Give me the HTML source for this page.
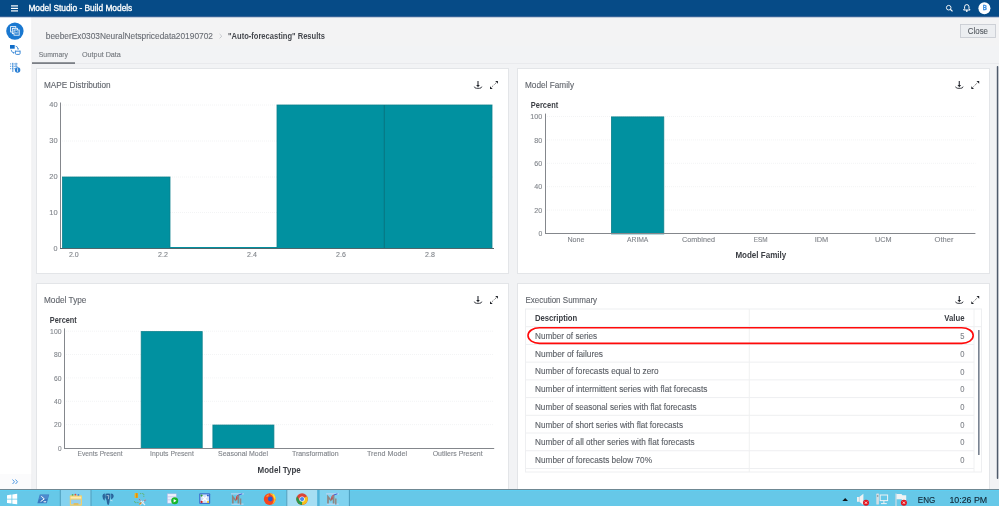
<!DOCTYPE html>
<html><head><meta charset="utf-8"><title>Model Studio - Build Models</title>
<style>html,body{margin:0;padding:0;width:999px;height:506px;overflow:hidden;background:#f2f3f5}
svg{display:block;will-change:transform;font-family:"Liberation Sans",sans-serif}</style></head>
<body><svg width="999" height="506" viewBox="0 0 999 506">
<rect x="0" y="0" width="999" height="506" fill="#f2f3f5"/>
<rect x="32" y="17" width="967" height="29" fill="#f3f3f4"/>
<rect x="0" y="17" width="32" height="472" fill="#ffffff"/>
<rect x="0" y="474" width="32" height="15" fill="#fbfbfc"/>
<rect x="31.5" y="17" width="0.6" height="472" fill="#e9eaec"/>
<rect x="0" y="0" width="999" height="16.3" fill="#064b87"/>
<rect x="0" y="16.3" width="999" height="0.9" fill="#013a7c"/>
<rect x="11" y="5.3" width="7" height="1.2" fill="#ffffff"/>
<rect x="11" y="7.8" width="7" height="1.2" fill="#ffffff"/>
<rect x="11" y="10.3" width="7" height="1.2" fill="#ffffff"/>
<text x="28.40" y="11.00" font-size="8.72" font-weight="normal" fill="#ffffff" textLength="103.91" lengthAdjust="spacingAndGlyphs" stroke="#ffffff" stroke-width="0.3">Model Studio - Build Models</text>
<circle cx="948.7" cy="7.7" r="2.3" fill="none" stroke="#ffffff" stroke-width="0.9"/>
<line x1="950.3" y1="9.3" x2="952.5" y2="11.4" stroke="#ffffff" stroke-width="1.2"/>
<path d="M963.5 10 L964.6 8.6 L964.6 6.8 Q964.6 4.6 966.8 4.6 Q969 4.6 969 6.8 L969 8.6 L970.1 10 Z" fill="none" stroke="#ffffff" stroke-width="1"/>
<circle cx="966.8" cy="11" r="0.9" fill="#ffffff"/>
<circle cx="984.4" cy="8.2" r="6" fill="#ffffff"/>
<text x="982.80" y="10.40" font-size="7.56" font-weight="bold" fill="#3a8ee0" textLength="4.11" lengthAdjust="spacingAndGlyphs" stroke="#3a8ee0" stroke-width="0.3">B</text>
<circle cx="14.9" cy="31.1" r="8.7" fill="#1a78d0"/>
<rect x="10.6" y="26.6" width="5.2" height="5.4" fill="#1a78d0" stroke="#ffffff" stroke-width="0.8"/>
<rect x="12.3" y="28.3" width="5.2" height="5.4" fill="#1a78d0" stroke="#ffffff" stroke-width="0.8"/>
<rect x="14" y="30" width="5.2" height="5.2" fill="#1a78d0" stroke="#ffffff" stroke-width="0.8"/>
<path d="M15.3 33.6 L15.3 31.6 M16.6 33.6 L16.6 32.2 M17.9 33.6 L17.9 31.2" stroke="#ffffff" stroke-width="0.6"/>
<path d="M13.4 29 L13.4 27.6 M14.6 28.6 L14.6 27.8" stroke="#ffffff" stroke-width="0.5"/>
<rect x="10" y="45" width="4.7" height="3.7" fill="#0f6cc8"/>
<path d="M15.4 50.6 L15.4 53.4 Q15.4 54.4 16.4 54.4 L19.1 54.4 Q20.1 54.4 20.1 53.4 L20.1 50.6 M15.4 51.2 L20.1 51.2" fill="none" stroke="#2a7fd4" stroke-width="0.9"/>
<path d="M15.6 46.2 Q17.6 46.2 18 48.8" fill="none" stroke="#2a7fd4" stroke-width="0.8"/>
<path d="M17 48.6 L18.1 50 L19 48.4 Z" fill="#2a7fd4"/>
<path d="M11.2 49.8 Q11.4 52.4 13.6 52.8" fill="none" stroke="#2a7fd4" stroke-width="0.8"/>
<path d="M13.2 51.8 L14.8 52.8 L13.2 53.8 Z" fill="#2a7fd4"/>
<line x1="10" y1="63.9" x2="18.4" y2="63.9" stroke="#2a7fd4" stroke-width="0.8" stroke-dasharray="1.2 0.9"/>
<line x1="10" y1="66.3" x2="18.4" y2="66.3" stroke="#2a7fd4" stroke-width="0.8" stroke-dasharray="1.2 0.9"/>
<line x1="10" y1="68.7" x2="18.4" y2="68.7" stroke="#2a7fd4" stroke-width="0.8" stroke-dasharray="1.2 0.9"/>
<line x1="12.8" y1="62.8" x2="12.8" y2="72" stroke="#2a7fd4" stroke-width="0.8"/>
<line x1="16" y1="62.8" x2="16" y2="67.4" stroke="#2a7fd4" stroke-width="0.8"/>
<circle cx="17.6" cy="70" r="2.7" fill="#2a7fd4"/>
<rect x="17.25" y="69.2" width="0.8" height="2.5" fill="#ffffff"/><rect x="17.25" y="68" width="0.8" height="0.7" fill="#ffffff"/>
<path d="M12.5 479.5 L14.5 481.8 L12.5 484 M15.5 479.5 L17.5 481.8 L15.5 484" fill="none" stroke="#3b8de0" stroke-width="0.9"/>
<text x="45.80" y="39.00" font-size="8.87" font-weight="normal" fill="#6a6e75" textLength="167.11" lengthAdjust="spacingAndGlyphs" stroke="#6a6e75" stroke-width="0.12">beeberEx0303NeuralNetspricedata20190702</text>
<path d="M219.6 34 L221.8 36.2 L219.6 38.4" fill="none" stroke="#b9bcc1" stroke-width="0.8"/>
<text x="228.00" y="39.00" font-size="8.87" font-weight="bold" fill="#45484e" textLength="96.99" lengthAdjust="spacingAndGlyphs" >"Auto-forecasting" Results</text>
<rect x="960.5" y="24.5" width="35" height="13" fill="#eceef1" stroke="#c9cdd3" stroke-width="0.9"/>
<text x="967.80" y="34.20" font-size="8.87" font-weight="normal" fill="#555a61" textLength="20.21" lengthAdjust="spacingAndGlyphs" stroke="#555a61" stroke-width="0.12">Close</text>
<text x="38.80" y="56.80" font-size="7.70" font-weight="normal" fill="#74787e" textLength="29.19" lengthAdjust="spacingAndGlyphs" stroke="#74787e" stroke-width="0.12">Summary</text>
<text x="82.00" y="56.80" font-size="7.70" font-weight="normal" fill="#74787e" textLength="38.88" lengthAdjust="spacingAndGlyphs" stroke="#74787e" stroke-width="0.12">Output Data</text>
<rect x="32" y="63" width="967" height="0.8" fill="#e6e8eb"/>
<rect x="32" y="62.2" width="43" height="1.8" fill="#7b7f86"/>
<rect x="996.8" y="66" width="1.5" height="413" rx="0.7" fill="#4f5b6b"/>
<rect x="36.5" y="68.5" width="472" height="205" fill="#ffffff" stroke="#e3e5e8" stroke-width="1"/>
<rect x="517.5" y="68.5" width="472" height="205" fill="#ffffff" stroke="#e3e5e8" stroke-width="1"/>
<rect x="36.5" y="283.5" width="472" height="211" fill="#ffffff" stroke="#e3e5e8" stroke-width="1"/>
<rect x="517.5" y="283.5" width="472" height="211" fill="#ffffff" stroke="#e3e5e8" stroke-width="1"/>
<g transform="translate(0,0)">
<path d="M478 81 L478 85.6" fill="none" stroke="#3a3d44" stroke-width="1.2"/>
<path d="M476.2 85 L479.8 85 L478 87.3 Z" fill="#1f2228"/>
<path d="M474.3 86.6 Q474.8 88.4 476.5 88.3 L479.5 88.3 Q481.3 88.4 481.8 86.6" fill="none" stroke="#3a3d44" stroke-width="1"/>
<path d="M492.2 86.6 L496 82.9" stroke="#555" stroke-width="0.9" stroke-dasharray="1.1 0.9"/>
<path d="M490 89 L490 86.3 L492.7 89 Z M497.9 81 L495.2 81 L497.9 83.7 Z" fill="#1f2228"/>
</g>
<g transform="translate(0,0)">
<path d="M959.3 81 L959.3 85.6" fill="none" stroke="#3a3d44" stroke-width="1.2"/>
<path d="M957.5 85 L961.0999999999999 85 L959.3 87.3 Z" fill="#1f2228"/>
<path d="M955.5999999999999 86.6 Q956.0999999999999 88.4 957.8 88.3 L960.8 88.3 Q962.5999999999999 88.4 963.0999999999999 86.6" fill="none" stroke="#3a3d44" stroke-width="1"/>
<path d="M973.5 86.6 L977.3 82.9" stroke="#555" stroke-width="0.9" stroke-dasharray="1.1 0.9"/>
<path d="M971.3 89 L971.3 86.3 L974.0 89 Z M979.1999999999999 81 L976.5 81 L979.1999999999999 83.7 Z" fill="#1f2228"/>
</g>
<g transform="translate(0,215)">
<path d="M478 81 L478 85.6" fill="none" stroke="#3a3d44" stroke-width="1.2"/>
<path d="M476.2 85 L479.8 85 L478 87.3 Z" fill="#1f2228"/>
<path d="M474.3 86.6 Q474.8 88.4 476.5 88.3 L479.5 88.3 Q481.3 88.4 481.8 86.6" fill="none" stroke="#3a3d44" stroke-width="1"/>
<path d="M492.2 86.6 L496 82.9" stroke="#555" stroke-width="0.9" stroke-dasharray="1.1 0.9"/>
<path d="M490 89 L490 86.3 L492.7 89 Z M497.9 81 L495.2 81 L497.9 83.7 Z" fill="#1f2228"/>
</g>
<g transform="translate(0,215)">
<path d="M959.3 81 L959.3 85.6" fill="none" stroke="#3a3d44" stroke-width="1.2"/>
<path d="M957.5 85 L961.0999999999999 85 L959.3 87.3 Z" fill="#1f2228"/>
<path d="M955.5999999999999 86.6 Q956.0999999999999 88.4 957.8 88.3 L960.8 88.3 Q962.5999999999999 88.4 963.0999999999999 86.6" fill="none" stroke="#3a3d44" stroke-width="1"/>
<path d="M973.5 86.6 L977.3 82.9" stroke="#555" stroke-width="0.9" stroke-dasharray="1.1 0.9"/>
<path d="M971.3 89 L971.3 86.3 L974.0 89 Z M979.1999999999999 81 L976.5 81 L979.1999999999999 83.7 Z" fill="#1f2228"/>
</g>
<text x="44.00" y="87.80" font-size="8.72" font-weight="normal" fill="#62666d" textLength="66.59" lengthAdjust="spacingAndGlyphs" stroke="#62666d" stroke-width="0.12">MAPE Distribution</text>
<text x="525.00" y="88.00" font-size="8.72" font-weight="normal" fill="#62666d" textLength="49.01" lengthAdjust="spacingAndGlyphs" stroke="#62666d" stroke-width="0.12">Model Family</text>
<text x="44.00" y="302.80" font-size="8.72" font-weight="normal" fill="#62666d" textLength="42.41" lengthAdjust="spacingAndGlyphs" stroke="#62666d" stroke-width="0.12">Model Type</text>
<text x="525.40" y="302.80" font-size="8.72" font-weight="normal" fill="#62666d" textLength="71.68" lengthAdjust="spacingAndGlyphs" stroke="#62666d" stroke-width="0.12">Execution Summary</text>
<line x1="62" y1="105" x2="493" y2="105" stroke="#f2f3f4" stroke-width="0.9" stroke-dasharray="1 1"/>
<line x1="62" y1="141" x2="493" y2="141" stroke="#f2f3f4" stroke-width="0.9" stroke-dasharray="1 1"/>
<line x1="62" y1="177" x2="493" y2="177" stroke="#f2f3f4" stroke-width="0.9" stroke-dasharray="1 1"/>
<line x1="62" y1="212.5" x2="493" y2="212.5" stroke="#f2f3f4" stroke-width="0.9" stroke-dasharray="1 1"/>
<rect x="62.5" y="177" width="107.5" height="71.5" fill="#0191a0" stroke="#0a808c" stroke-width="0.8"/>
<rect x="170" y="247" width="107" height="1.2" fill="#0191a0"/>
<rect x="277" y="105" width="215" height="143.5" fill="#0191a0" stroke="#0a808c" stroke-width="0.8"/>
<line x1="384.3" y1="105" x2="384.3" y2="248" stroke="#0a6f7a" stroke-width="0.8"/>
<line x1="60.5" y1="102.5" x2="60.5" y2="249" stroke="#84878c" stroke-width="1"/>
<line x1="60" y1="248.5" x2="494" y2="248.5" stroke="#4f666c" stroke-width="1"/>
<text x="49.30" y="107.40" font-size="7.99" font-weight="normal" fill="#81858b" textLength="8.32" lengthAdjust="spacingAndGlyphs" stroke="#81858b" stroke-width="0.12">40</text>
<text x="49.30" y="143.10" font-size="7.99" font-weight="normal" fill="#81858b" textLength="8.32" lengthAdjust="spacingAndGlyphs" stroke="#81858b" stroke-width="0.12">30</text>
<text x="49.30" y="179.40" font-size="7.99" font-weight="normal" fill="#81858b" textLength="8.32" lengthAdjust="spacingAndGlyphs" stroke="#81858b" stroke-width="0.12">20</text>
<text x="49.30" y="214.90" font-size="7.99" font-weight="normal" fill="#81858b" textLength="8.32" lengthAdjust="spacingAndGlyphs" stroke="#81858b" stroke-width="0.12">10</text>
<text x="53.40" y="250.90" font-size="7.99" font-weight="normal" fill="#81858b" textLength="4.01" lengthAdjust="spacingAndGlyphs" stroke="#81858b" stroke-width="0.12">0</text>
<text x="68.90" y="257.00" font-size="7.70" font-weight="normal" fill="#81858b" textLength="9.80" lengthAdjust="spacingAndGlyphs" stroke="#81858b" stroke-width="0.12">2.0</text>
<text x="158.10" y="257.00" font-size="7.70" font-weight="normal" fill="#81858b" textLength="9.80" lengthAdjust="spacingAndGlyphs" stroke="#81858b" stroke-width="0.12">2.2</text>
<text x="247.10" y="257.00" font-size="7.70" font-weight="normal" fill="#81858b" textLength="9.80" lengthAdjust="spacingAndGlyphs" stroke="#81858b" stroke-width="0.12">2.4</text>
<text x="336.10" y="257.00" font-size="7.70" font-weight="normal" fill="#81858b" textLength="9.80" lengthAdjust="spacingAndGlyphs" stroke="#81858b" stroke-width="0.12">2.6</text>
<text x="425.10" y="257.00" font-size="7.70" font-weight="normal" fill="#81858b" textLength="9.80" lengthAdjust="spacingAndGlyphs" stroke="#81858b" stroke-width="0.12">2.8</text>
<line x1="547" y1="116.50" x2="975.5" y2="116.50" stroke="#f2f3f4" stroke-width="0.9" stroke-dasharray="1 1"/>
<line x1="547" y1="139.90" x2="975.5" y2="139.90" stroke="#f2f3f4" stroke-width="0.9" stroke-dasharray="1 1"/>
<line x1="547" y1="163.30" x2="975.5" y2="163.30" stroke="#f2f3f4" stroke-width="0.9" stroke-dasharray="1 1"/>
<line x1="547" y1="186.70" x2="975.5" y2="186.70" stroke="#f2f3f4" stroke-width="0.9" stroke-dasharray="1 1"/>
<line x1="547" y1="210.10" x2="975.5" y2="210.10" stroke="#f2f3f4" stroke-width="0.9" stroke-dasharray="1 1"/>
<rect x="611.4" y="116.9" width="52.4" height="117.0" fill="#0191a0" stroke="#0a808c" stroke-width="0.8"/>
<line x1="545.5" y1="113.6" x2="545.5" y2="234" stroke="#84878c" stroke-width="1"/>
<line x1="545" y1="233.5" x2="975.4" y2="233.5" stroke="#84878c" stroke-width="1"/>
<text x="530.80" y="108.00" font-size="8.72" font-weight="bold" fill="#3b3e44" textLength="27.39" lengthAdjust="spacingAndGlyphs" >Percent</text>
<text x="530.20" y="119.25" font-size="7.99" font-weight="normal" fill="#81858b" textLength="11.99" lengthAdjust="spacingAndGlyphs" stroke="#81858b" stroke-width="0.12">100</text>
<text x="534.30" y="142.65" font-size="7.99" font-weight="normal" fill="#81858b" textLength="7.92" lengthAdjust="spacingAndGlyphs" stroke="#81858b" stroke-width="0.12">80</text>
<text x="534.30" y="166.05" font-size="7.99" font-weight="normal" fill="#81858b" textLength="7.92" lengthAdjust="spacingAndGlyphs" stroke="#81858b" stroke-width="0.12">60</text>
<text x="534.30" y="189.45" font-size="7.99" font-weight="normal" fill="#81858b" textLength="7.92" lengthAdjust="spacingAndGlyphs" stroke="#81858b" stroke-width="0.12">40</text>
<text x="534.30" y="212.85" font-size="7.99" font-weight="normal" fill="#81858b" textLength="7.92" lengthAdjust="spacingAndGlyphs" stroke="#81858b" stroke-width="0.12">20</text>
<text x="538.40" y="236.25" font-size="7.99" font-weight="normal" fill="#81858b" textLength="3.81" lengthAdjust="spacingAndGlyphs" stroke="#81858b" stroke-width="0.12">0</text>
<text x="567.40" y="242.00" font-size="7.56" font-weight="normal" fill="#81858b" textLength="17.01" lengthAdjust="spacingAndGlyphs" stroke="#81858b" stroke-width="0.12">None</text>
<text x="627.00" y="242.00" font-size="7.56" font-weight="normal" fill="#81858b" textLength="21.38" lengthAdjust="spacingAndGlyphs" stroke="#81858b" stroke-width="0.12">ARIMA</text>
<text x="682.00" y="242.00" font-size="7.56" font-weight="normal" fill="#81858b" textLength="32.99" lengthAdjust="spacingAndGlyphs" stroke="#81858b" stroke-width="0.12">Combined</text>
<text x="753.70" y="242.00" font-size="7.56" font-weight="normal" fill="#81858b" textLength="13.91" lengthAdjust="spacingAndGlyphs" stroke="#81858b" stroke-width="0.12">ESM</text>
<text x="814.70" y="242.00" font-size="7.56" font-weight="normal" fill="#81858b" textLength="13.59" lengthAdjust="spacingAndGlyphs" stroke="#81858b" stroke-width="0.12">IDM</text>
<text x="875.00" y="242.00" font-size="7.56" font-weight="normal" fill="#81858b" textLength="16.62" lengthAdjust="spacingAndGlyphs" stroke="#81858b" stroke-width="0.12">UCM</text>
<text x="934.50" y="242.00" font-size="7.56" font-weight="normal" fill="#81858b" textLength="18.91" lengthAdjust="spacingAndGlyphs" stroke="#81858b" stroke-width="0.12">Other</text>
<text x="735.40" y="258.30" font-size="9.16" font-weight="bold" fill="#3b3e44" textLength="50.80" lengthAdjust="spacingAndGlyphs" >Model Family</text>
<line x1="66" y1="331.20" x2="494" y2="331.20" stroke="#f2f3f4" stroke-width="0.9" stroke-dasharray="1 1"/>
<line x1="66" y1="354.56" x2="494" y2="354.56" stroke="#f2f3f4" stroke-width="0.9" stroke-dasharray="1 1"/>
<line x1="66" y1="377.92" x2="494" y2="377.92" stroke="#f2f3f4" stroke-width="0.9" stroke-dasharray="1 1"/>
<line x1="66" y1="401.28" x2="494" y2="401.28" stroke="#f2f3f4" stroke-width="0.9" stroke-dasharray="1 1"/>
<line x1="66" y1="424.64" x2="494" y2="424.64" stroke="#f2f3f4" stroke-width="0.9" stroke-dasharray="1 1"/>
<rect x="141.2" y="331.59999999999997" width="61" height="116.80000000000001" fill="#0191a0" stroke="#0a808c" stroke-width="0.8"/>
<rect x="212.9" y="425.03999999999996" width="61" height="23.360000000000003" fill="#0191a0" stroke="#0a808c" stroke-width="0.8"/>
<line x1="64.5" y1="328.4" x2="64.5" y2="449" stroke="#84878c" stroke-width="1"/>
<line x1="64" y1="448.5" x2="494.2" y2="448.5" stroke="#84878c" stroke-width="1"/>
<text x="49.80" y="322.80" font-size="8.72" font-weight="bold" fill="#3b3e44" textLength="26.99" lengthAdjust="spacingAndGlyphs" >Percent</text>
<text x="50.10" y="333.95" font-size="7.99" font-weight="normal" fill="#81858b" textLength="11.39" lengthAdjust="spacingAndGlyphs" stroke="#81858b" stroke-width="0.12">100</text>
<text x="54.00" y="357.31" font-size="7.99" font-weight="normal" fill="#81858b" textLength="7.52" lengthAdjust="spacingAndGlyphs" stroke="#81858b" stroke-width="0.12">80</text>
<text x="54.00" y="380.67" font-size="7.99" font-weight="normal" fill="#81858b" textLength="7.52" lengthAdjust="spacingAndGlyphs" stroke="#81858b" stroke-width="0.12">60</text>
<text x="54.00" y="404.03" font-size="7.99" font-weight="normal" fill="#81858b" textLength="7.52" lengthAdjust="spacingAndGlyphs" stroke="#81858b" stroke-width="0.12">40</text>
<text x="54.00" y="427.39" font-size="7.99" font-weight="normal" fill="#81858b" textLength="7.52" lengthAdjust="spacingAndGlyphs" stroke="#81858b" stroke-width="0.12">20</text>
<text x="57.90" y="450.75" font-size="7.99" font-weight="normal" fill="#81858b" textLength="3.61" lengthAdjust="spacingAndGlyphs" stroke="#81858b" stroke-width="0.12">0</text>
<text x="77.50" y="456.40" font-size="7.70" font-weight="normal" fill="#81858b" textLength="45.01" lengthAdjust="spacingAndGlyphs" stroke="#81858b" stroke-width="0.12">Events Present</text>
<text x="150.00" y="456.40" font-size="7.70" font-weight="normal" fill="#81858b" textLength="43.79" lengthAdjust="spacingAndGlyphs" stroke="#81858b" stroke-width="0.12">Inputs Present</text>
<text x="218.00" y="456.40" font-size="7.70" font-weight="normal" fill="#81858b" textLength="50.01" lengthAdjust="spacingAndGlyphs" stroke="#81858b" stroke-width="0.12">Seasonal Model</text>
<text x="291.90" y="456.40" font-size="7.70" font-weight="normal" fill="#81858b" textLength="46.68" lengthAdjust="spacingAndGlyphs" stroke="#81858b" stroke-width="0.12">Transformation</text>
<text x="367.00" y="456.40" font-size="7.70" font-weight="normal" fill="#81858b" textLength="40.01" lengthAdjust="spacingAndGlyphs" stroke="#81858b" stroke-width="0.12">Trend Model</text>
<text x="432.70" y="456.40" font-size="7.70" font-weight="normal" fill="#81858b" textLength="50.00" lengthAdjust="spacingAndGlyphs" stroke="#81858b" stroke-width="0.12">Outliers Present</text>
<text x="257.60" y="473.00" font-size="9.16" font-weight="bold" fill="#3b3e44" textLength="43.21" lengthAdjust="spacingAndGlyphs" >Model Type</text>
<rect x="525.5" y="309" width="456" height="163" fill="#ffffff" stroke="#eeeff1" stroke-width="1"/>
<line x1="749.3" y1="309" x2="749.3" y2="472" stroke="#eeeff1" stroke-width="0.9"/>
<line x1="974" y1="309" x2="974" y2="472" stroke="#eeeff1" stroke-width="0.9"/>
<line x1="525.5" y1="326.7" x2="981.5" y2="326.7" stroke="#eeeff1" stroke-width="1"/>
<line x1="525.5" y1="344.42" x2="974" y2="344.42" stroke="#eeeff1" stroke-width="1"/>
<text x="535.00" y="339.00" font-size="8.58" font-weight="normal" fill="#5c6067" textLength="62.19" lengthAdjust="spacingAndGlyphs" stroke="#5c6067" stroke-width="0.12">Number of series</text>
<text x="960.20" y="339.10" font-size="8.58" font-weight="normal" fill="#81858b" textLength="4.21" lengthAdjust="spacingAndGlyphs" stroke="#81858b" stroke-width="0.12">5</text>
<line x1="525.5" y1="362.14" x2="974" y2="362.14" stroke="#eeeff1" stroke-width="1"/>
<text x="535.00" y="356.72" font-size="8.58" font-weight="normal" fill="#5c6067" textLength="68.00" lengthAdjust="spacingAndGlyphs" stroke="#5c6067" stroke-width="0.12">Number of failures</text>
<text x="960.20" y="356.82" font-size="8.58" font-weight="normal" fill="#81858b" textLength="4.21" lengthAdjust="spacingAndGlyphs" stroke="#81858b" stroke-width="0.12">0</text>
<line x1="525.5" y1="379.86" x2="974" y2="379.86" stroke="#eeeff1" stroke-width="1"/>
<text x="535.00" y="374.44" font-size="8.58" font-weight="normal" fill="#5c6067" textLength="123.59" lengthAdjust="spacingAndGlyphs" stroke="#5c6067" stroke-width="0.12">Number of forecasts equal to zero</text>
<text x="960.20" y="374.54" font-size="8.58" font-weight="normal" fill="#81858b" textLength="4.21" lengthAdjust="spacingAndGlyphs" stroke="#81858b" stroke-width="0.12">0</text>
<line x1="525.5" y1="397.58" x2="974" y2="397.58" stroke="#eeeff1" stroke-width="1"/>
<text x="535.00" y="392.16" font-size="8.58" font-weight="normal" fill="#5c6067" textLength="172.41" lengthAdjust="spacingAndGlyphs" stroke="#5c6067" stroke-width="0.12">Number of intermittent series with flat forecasts</text>
<text x="960.20" y="392.26" font-size="8.58" font-weight="normal" fill="#81858b" textLength="4.21" lengthAdjust="spacingAndGlyphs" stroke="#81858b" stroke-width="0.12">0</text>
<line x1="525.5" y1="415.30" x2="974" y2="415.30" stroke="#eeeff1" stroke-width="1"/>
<text x="535.00" y="409.88" font-size="8.58" font-weight="normal" fill="#5c6067" textLength="161.58" lengthAdjust="spacingAndGlyphs" stroke="#5c6067" stroke-width="0.12">Number of seasonal series with flat forecasts</text>
<text x="960.20" y="409.98" font-size="8.58" font-weight="normal" fill="#81858b" textLength="4.21" lengthAdjust="spacingAndGlyphs" stroke="#81858b" stroke-width="0.12">0</text>
<line x1="525.5" y1="433.02" x2="974" y2="433.02" stroke="#eeeff1" stroke-width="1"/>
<text x="535.00" y="427.60" font-size="8.58" font-weight="normal" fill="#5c6067" textLength="147.98" lengthAdjust="spacingAndGlyphs" stroke="#5c6067" stroke-width="0.12">Number of short series with flat forecasts</text>
<text x="960.20" y="427.70" font-size="8.58" font-weight="normal" fill="#81858b" textLength="4.21" lengthAdjust="spacingAndGlyphs" stroke="#81858b" stroke-width="0.12">0</text>
<line x1="525.5" y1="450.74" x2="974" y2="450.74" stroke="#eeeff1" stroke-width="1"/>
<text x="535.00" y="445.32" font-size="8.58" font-weight="normal" fill="#5c6067" textLength="159.58" lengthAdjust="spacingAndGlyphs" stroke="#5c6067" stroke-width="0.12">Number of all other series with flat forecasts</text>
<text x="960.20" y="445.42" font-size="8.58" font-weight="normal" fill="#81858b" textLength="4.21" lengthAdjust="spacingAndGlyphs" stroke="#81858b" stroke-width="0.12">0</text>
<line x1="525.5" y1="468.46" x2="974" y2="468.46" stroke="#eeeff1" stroke-width="1"/>
<text x="535.00" y="463.04" font-size="8.58" font-weight="normal" fill="#5c6067" textLength="116.99" lengthAdjust="spacingAndGlyphs" stroke="#5c6067" stroke-width="0.12">Number of forecasts below 70%</text>
<text x="960.20" y="463.14" font-size="8.58" font-weight="normal" fill="#81858b" textLength="4.21" lengthAdjust="spacingAndGlyphs" stroke="#81858b" stroke-width="0.12">0</text>
<text x="534.90" y="321.00" font-size="8.58" font-weight="bold" fill="#3b3e44" textLength="42.41" lengthAdjust="spacingAndGlyphs" >Description</text>
<text x="944.20" y="320.80" font-size="8.58" font-weight="bold" fill="#3b3e44" textLength="20.28" lengthAdjust="spacingAndGlyphs" >Value</text>
<rect x="978.2" y="330" width="1.3" height="125" fill="#5a6678"/>
<rect x="528" y="327.7" width="445.2" height="15.7" rx="11.5" ry="7.85" fill="none" stroke="#ff0a0a" stroke-width="1.6"/>
<rect x="0" y="489" width="999" height="17" fill="#66c8e8"/>
<rect x="0" y="490" width="999" height="1" fill="#5ecff2"/>
<rect x="0" y="489" width="999" height="1" fill="#6f8893"/>
<rect x="60" y="490" width="31.3" height="16" fill="#84d2ef"/>
<line x1="60.3" y1="490" x2="60.3" y2="506" stroke="#3f8fb0" stroke-width="0.8"/>
<line x1="91" y1="490" x2="91" y2="506" stroke="#3f8fb0" stroke-width="0.8"/>
<rect x="286.5" y="490" width="31.3" height="16" fill="#a6def3"/>
<rect x="318.5" y="490" width="31.1" height="16" fill="#7fd2ef"/>
<rect x="317.2" y="490" width="2.4" height="16" fill="#4fb2d8"/>
<line x1="286.8" y1="490" x2="286.8" y2="506" stroke="#3f8fb0" stroke-width="0.8"/>
<line x1="349.4" y1="490" x2="349.4" y2="506" stroke="#3f8fb0" stroke-width="0.8"/>
<path d="M7 495.2 L11.5 494.6 L11.5 498.7 L7 498.7 Z M12.3 494.5 L17.2 493.8 L17.2 498.7 L12.3 498.7 Z M7 499.5 L11.5 499.5 L11.5 503.6 L7 503 Z M12.3 499.5 L17.2 499.5 L17.2 504.2 L12.3 503.7 Z" fill="#ffffff"/>
<path d="M39.8 494.5 L49.2 494.5 L46.8 503.3 L37.4 503.3 Z" fill="#3a78c0"/>
<path d="M40.2 494.8 L48.8 494.8 L47.6 499 L39 499 Z" fill="#5a96d6" opacity="0.6"/>
<path d="M41.3 496.3 L44.3 498.9 L40.6 501.6 M43.6 501.8 L46.2 501.8" fill="none" stroke="#ffffff" stroke-width="1"/>
<rect x="69.8" y="495.2" width="12.2" height="10.5" rx="1" fill="#f0cf6e"/>
<rect x="70.6" y="496.6" width="10.6" height="2" fill="#fbeab0"/>
<rect x="71" y="499.6" width="9.8" height="4.6" fill="#96cfee"/>
<rect x="73.6" y="503.2" width="4.8" height="1.5" fill="#e8b84a"/>
<circle cx="72.6" cy="494.8" r="0.9" fill="#58b35a"/><circle cx="75.4" cy="494.6" r="0.9" fill="#e24a3a"/><circle cx="78.4" cy="494.9" r="0.9" fill="#3f86e0"/>
<path d="M102.4 496 Q102.6 493.3 104.8 493.5 Q105.3 497 104.6 500.8 Q102.6 499.5 102.4 496 Z" fill="#2a649b"/>
<path d="M105.6 493.7 Q108 493.2 110.4 493.8 Q110.8 497 109.7 500 Q109.6 503 108.6 505 Q107.3 505.2 107 503 Q106.8 499.5 105.3 497.8 Q105.2 495.5 105.6 493.7 Z" fill="#2a649b"/>
<path d="M110.9 493.6 Q113.5 493.6 113.8 496 Q113.5 498.8 111 499.6 Q111.6 496.5 110.9 493.6 Z" fill="#2a649b"/>
<path d="M106.6 495.6 L108.8 495.6 L108.4 499.2" fill="none" stroke="#e8f2f8" stroke-width="0.6"/>
<path d="M110.2 500.2 L112.5 500.8" fill="none" stroke="#e8f2f8" stroke-width="0.6"/>
<rect x="134.6" y="493" width="3.5" height="5" rx="0.8" fill="#f0b422"/>
<rect x="136.2" y="493.2" width="1.2" height="4.6" fill="#d98a10"/>
<path d="M140 493.6 L143.8 493.6 L143.8 497" fill="none" stroke="#5fae4d" stroke-width="0.7" stroke-dasharray="1.3 0.8"/>
<path d="M134.6 501 L134.6 502.6 L138.5 502.6" fill="none" stroke="#5fae4d" stroke-width="0.7" stroke-dasharray="1.3 0.8"/>
<path d="M139 499 L145 505 M145.8 499.6 L139.8 505" stroke="#e4e8f0" stroke-width="1.1"/>
<path d="M139 499 L140.6 500.6 M145.8 499.6 L144.2 501.2" stroke="#8a7f9a" stroke-width="1.3"/>
<path d="M139.4 504.6 L141.4 502.6" stroke="#e08a20" stroke-width="1.4"/>
<rect x="167.3" y="493.8" width="9" height="9.4" fill="#eef0fb"/>
<path d="M167.3 496.8 H176.3 M167.3 499.8 H176.3" stroke="#b8c0ea" stroke-width="0.7"/>
<rect x="167.3" y="493.8" width="9" height="9.4" fill="none" stroke="#aab4e6" stroke-width="0.5"/>
<circle cx="174.7" cy="500.8" r="3.5" fill="#18b62a"/>
<path d="M173.6 499 L176.5 500.8 L173.6 502.6 Z" fill="#ffffff"/>
<rect x="199.2" y="493.2" width="11" height="10.9" rx="1" fill="#3d6fd0"/>
<rect x="200.4" y="494.4" width="8.6" height="8.5" fill="#cfe0f6"/>
<path d="M201.5 495.5 L208 502 M208 495.5 L201.5 502" stroke="#ffffff" stroke-width="1.2"/>
<circle cx="201.6" cy="495.6" r="1.1" fill="#2c9a3a"/><circle cx="207.9" cy="495.6" r="1" fill="#2d5fcf"/><circle cx="201.6" cy="501.9" r="1.1" fill="#c8202a"/><circle cx="208" cy="502" r="1.1" fill="#f2c21a"/>
<rect x="231" y="493.4" width="12.8" height="1" fill="#c9d6f2"/>
<rect x="231.5" y="503.6" width="12" height="1" fill="#c9d6f2"/>
<path d="M232.8 503.4 L232.8 496.8 L235.6 500.2 L238.4 496.8 L238.4 503.4" fill="none" stroke="#8f8580" stroke-width="1.7"/>
<path d="M240.6 498.5 L240.6 504.6" fill="none" stroke="#8f8580" stroke-width="1.4"/>
<path d="M236.6 499.5 Q235.8 495.6 238.6 495" fill="none" stroke="#e23030" stroke-width="1"/>
<path d="M238.6 495 L242.2 493.8" fill="none" stroke="#3550d0" stroke-width="0.9"/>
<rect x="326.2" y="493.4" width="12.8" height="1" fill="#c9d6f2"/>
<rect x="326.7" y="503.6" width="12" height="1" fill="#c9d6f2"/>
<path d="M328.0 503.4 L328.0 496.8 L330.8 500.2 L333.59999999999997 496.8 L333.59999999999997 503.4" fill="none" stroke="#8f8580" stroke-width="1.7"/>
<path d="M335.8 498.5 L335.8 504.6" fill="none" stroke="#8f8580" stroke-width="1.4"/>
<path d="M331.8 499.5 Q331.0 495.6 333.8 495" fill="none" stroke="#e23030" stroke-width="1"/>
<path d="M333.8 495 L337.4 493.8" fill="none" stroke="#3550d0" stroke-width="0.9"/>
<circle cx="269.7" cy="499.1" r="5.9" fill="#f5451e"/>
<path d="M269.7 493.2 A5.9 5.9 0 0 1 275.6 499.1 A5.9 5.9 0 0 1 272 504.5 Q274.6 501 273.4 497.6 Q272.4 495 270.4 494.2 Z" fill="#ffb52c"/>
<path d="M272.6 493.6 Q275.8 495.5 275.5 499.5 L274 498 Z" fill="#ffe43a"/>
<circle cx="270.3" cy="499" r="2.4" fill="#2f58c8"/>
<path d="M266 496.8 Q266.8 494.6 268.8 494.2 L268.4 496.6 Z" fill="#ff9a2c"/>
<circle cx="302.05" cy="499.1" r="5.8" fill="#db4437"/>
<path d="M302.05 499.1 L296.98 502.0 A5.8 5.8 0 0 1 297.0 496.2 L299.5 500.5 Z" fill="#1e9e4a"/>
<path d="M302.05 499.1 L307.1 496.2 A5.8 5.8 0 0 1 302.05 504.9 Z" fill="#f6c21c"/>
<path d="M302.05 499.1 L302.05 504.9 A5.8 5.8 0 0 1 296.98 502.0 Z" fill="#1e9e4a"/>
<circle cx="302.05" cy="499.1" r="2.7" fill="#ffffff"/><circle cx="302.05" cy="499.1" r="2.1" fill="#4a88ee"/>
<path d="M842.4 501 L845.2 497.9 L848 501 Z" fill="#101418"/>
<path d="M857 497 L859.3 497 L863.4 493.8 L863.4 505 L859.3 501.8 L857 501.8 Z" fill="#eef2f4"/>
<path d="M859.3 497 L859.3 501.8" stroke="#a9b4ba" stroke-width="0.5"/>
<circle cx="866" cy="502.7" r="3" fill="#e4141e"/>
<path d="M864.9 501.6 L867.1 503.8 M867.1 501.6 L864.9 503.8" stroke="#fff" stroke-width="0.8"/>
<rect x="876.3" y="493.6" width="2.6" height="11" rx="0.6" fill="#d6dde2"/>
<rect x="876.9" y="495" width="1.4" height="2" fill="#9aa6ad"/>
<rect x="880.2" y="495" width="7.4" height="5.6" fill="none" stroke="#eef2f4" stroke-width="1"/>
<path d="M883.9 500.6 L883.9 503.2 M881 503.6 L886.8 503.6" stroke="#eef2f4" stroke-width="1"/>
<path d="M896 493.6 L896 506" stroke="#d6dde2" stroke-width="1.1"/>
<path d="M896.5 494 L901.5 494 L902.5 495.2 L906.2 495.2 L906.2 500.3 L902.5 500.3 L901.5 499.2 L896.5 499.2 Z" fill="#eef2f4"/>
<circle cx="903.9" cy="502.7" r="3" fill="#e4141e"/>
<path d="M902.8 501.6 L905 503.8 M905 501.6 L902.8 503.8" stroke="#fff" stroke-width="0.8"/>
<text x="917.80" y="502.90" font-size="9.59" font-weight="normal" fill="#0f2433" textLength="17.42" lengthAdjust="spacingAndGlyphs" stroke="#0f2433" stroke-width="0.12">ENG</text>
<text x="949.40" y="502.90" font-size="9.59" font-weight="normal" fill="#0f2433" textLength="37.80" lengthAdjust="spacingAndGlyphs" stroke="#0f2433" stroke-width="0.12">10:26 PM</text>
</svg></body></html>
